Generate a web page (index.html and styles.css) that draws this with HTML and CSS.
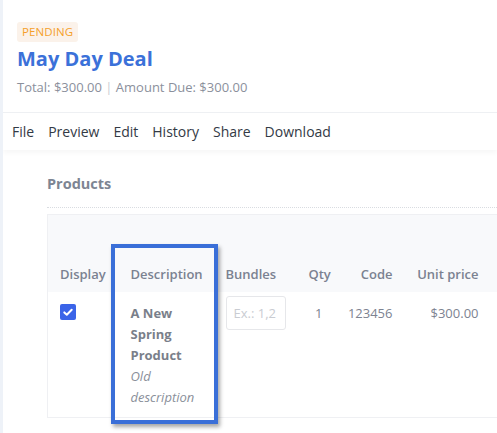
FILE: index.html
```html
<!DOCTYPE html>
<html>
<head>
<meta charset="utf-8">
<link rel="stylesheet" href="styles.css">
</head>
<body>
<div class="page">
  <header class="deal-header">
    <span class="badge">PENDING</span>
    <h1 class="deal-title">May Day Deal</h1>
    <div class="deal-sub">Total: $300.00 <span class="sep">|</span> Amount Due: $300.00</div>
  </header>
  <nav class="menu">
    <span>File</span><span>Preview</span><span>Edit</span><span>History</span><span>Share</span><span>Download</span>
  </nav>
  <section class="products">
    <h2 class="products-title">Products</h2>
    <div class="table-wrap">
      <table class="ptable">
        <colgroup>
          <col class="w-display"><col class="w-desc"><col class="w-bundles"><col class="w-qty"><col class="w-code"><col class="w-price"><col class="w-rest">
        </colgroup>
        <thead>
          <tr>
            <th>Display</th>
            <th>Description</th>
            <th class="th-bundles">Bundles</th>
            <th class="num">Qty</th>
            <th class="num">Code</th>
            <th class="num">Unit price</th>
            <th></th>
          </tr>
        </thead>
        <tbody>
          <tr>
            <td><span class="checkbox"><svg viewBox="0 0 16 16" width="16" height="16"><path d="M4.3 8.4 L6.8 10.7 L11.7 5.7" fill="none" stroke="#fff" stroke-width="2" stroke-linecap="round" stroke-linejoin="round"/></svg></span></td>
            <td><div class="pname">A New Spring Product</div><div class="pdesc">Old description</div></td>
            <td class="td-bundles"><input class="bundle-input" placeholder="Ex.: 1,2"></td>
            <td class="num">1</td>
            <td class="num">123456</td>
            <td class="num">$300.00</td>
            <td></td>
          </tr>
        </tbody>
      </table>
      <div class="highlight"></div>
    </div>
  </section>
</div>
</body>
</html>
```
FILE: styles.css
```css
html, body { margin: 0; padding: 0; background: #fff; }
body { font-family: "Open Sans", "Noto Sans", sans-serif; overflow: hidden; width: 497px; height: 433px; }
.page { border-left: 3px solid #eef2f8; height: 433px; box-sizing: border-box; overflow: hidden; }
.deal-header { display: flex; flex-direction: column; align-items: flex-start; padding: 22px 0 16px 14px; border-bottom: 1px solid #eef0f3; }
.badge { display: block; background: #fbf2ea; color: #f5a02a; font-size: 11.5px; font-weight: 500; line-height: 20px; height: 20px; padding: 0 5px; border-radius: 3px; letter-spacing: 0.1px; }
.deal-title { margin: 4px 0 0; color: #3b71d9; font-size: 20px; font-weight: 700; line-height: 26px; }
.deal-sub { color: #8b909c; font-size: 13px; line-height: 18px; margin-top: 6px; }
.sep { color: #c8ccd3; }
.menu { display: flex; gap: 14px; padding: 0 9px; height: 37px; align-items: center; font-size: 14px; color: #333a45; box-shadow: 0 3px 5px rgba(0,0,0,0.035); position: relative; }
.products { padding: 24px 0 20px 44px; }
.products-title { margin: 0; color: #7d8593; font-size: 14.5px; font-weight: 700; line-height: 20px; }
.table-wrap { position: relative; margin-top: 13px; border-top: 1px dotted #d9dce1; padding-top: 6px; width: 520px; }
.ptable { table-layout: fixed; border-collapse: collapse; width: 520px; border: 1px solid #eff0f3; font-size: 13px; color: #7d8391; }
.w-display { width: 71px; }
.w-desc { width: 97px; }
.w-bundles { width: 81px; }
.w-qty { width: 38px; }
.w-code { width: 70px; }
.w-price { width: 86px; }
.w-rest { width: 77px; }
.ptable thead tr { background: #f8f9fb; }
.ptable th { font-weight: 600; text-align: left; height: 77px; box-sizing: border-box; vertical-align: bottom; padding: 0 12px 9px; color: #7b8291; white-space: nowrap; line-height: 18px; }
.ptable th:first-child, .ptable td:first-child { padding-left: 12px; }
.ptable td { vertical-align: top; padding: 11px 12px 9px; line-height: 21px; }
.ptable .num { text-align: right; }
.ptable .th-bundles, .ptable .td-bundles { padding-left: 10px; padding-right: 0; }
.checkbox { display: block; width: 16px; height: 16px; background: #3b64e8; border-radius: 2px; margin-top: 1px; }
.checkbox svg { display: block; }
.pname { font-weight: 700; color: #7a7f8a; }
.pdesc { font-style: italic; color: #8a8f9a; }
.bundle-input { display: block; box-sizing: border-box; width: 60px; height: 34px; border: 1px solid #e6e7ea; border-radius: 3px; font-family: inherit; font-size: 13px; padding: 0 7px; margin-top: -7px; background: #fff; }
.bundle-input::placeholder { color: #c9ccd2; }
.highlight { position: absolute; left: 64px; top: 36px; width: 99px; height: 172px; border: 4px solid #3a6fd8; box-shadow: 2px 3px 4px rgba(0,0,0,0.35); pointer-events: none; }
```
